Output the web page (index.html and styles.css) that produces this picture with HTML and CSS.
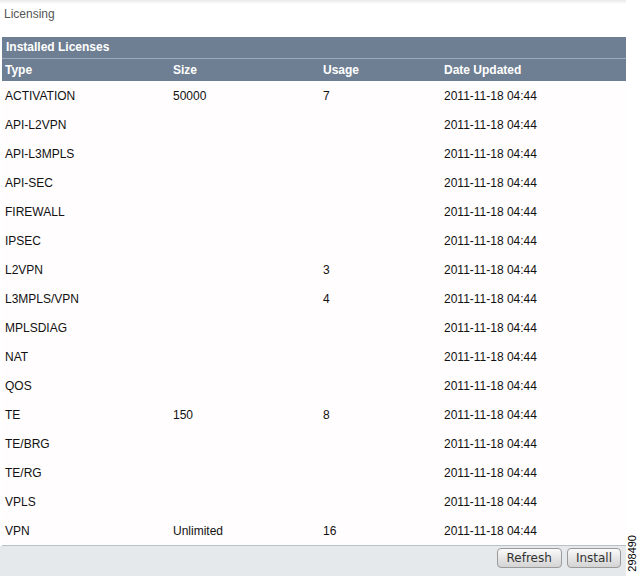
FILE: index.html
```html
<!DOCTYPE html>
<html lang="en">

<head>
    <meta charset="UTF-8">
    <title>Licensing</title>
    <link rel="stylesheet" href="styles.css">
</head>

<body>

    <div id="page">
        <div id="main">
            <div id="title">Licensing</div>
            <div id="panel">
                <div id="panel-head">Installed Licenses</div>
                <div class="row head">
                    <div>Type</div>
                    <div>Size</div>
                    <div>Usage</div>
                    <div>Date Updated</div>
                </div>
                <div id="rows"></div>
            </div>
            <div id="footer">
                <button class="btn">Refresh</button>
                <button class="btn">Install</button>
            </div>
        </div>
        <div id="side"><span id="fig-num">298490</span></div>
    </div>

    <script>
        let licenses = [
            ['ACTIVATION', '50000', '7'],
            ['API-L2VPN', '', ''],
            ['API-L3MPLS', '', ''],
            ['API-SEC', '', ''],
            ['FIREWALL', '', ''],
            ['IPSEC', '', ''],
            ['L2VPN', '', '3'],
            ['L3MPLS/VPN', '', '4'],
            ['MPLSDIAG', '', ''],
            ['NAT', '', ''],
            ['QOS', '', ''],
            ['TE', '150', '8'],
            ['TE/BRG', '', ''],
            ['TE/RG', '', ''],
            ['VPLS', '', ''],
            ['VPN', 'Unlimited', '16']
        ];
        let rows = document.getElementById('rows');
        licenses.forEach(item => {
            let row = document.createElement('div');
            row.classList.add('row');
            item.concat(['2011-11-18 04:44']).forEach(text => {
                let cell = document.createElement('div');
                cell.textContent = text;
                row.appendChild(cell);
            });
            rows.appendChild(row);
        });
    </script>

</body>

</html>
```

FILE: styles.css
```css
body {
    margin: 0;
    font-family: Arial, "Liberation Sans", sans-serif;
    font-size: 12px;
    color: #111;
    background-color: #fff;
}

#page {
    display: flex;
    width: 640px;
    height: 576px;
    overflow: hidden;
}

#main {
    width: 626px;
    display: flex;
    flex-direction: column;
    background: linear-gradient(#e9e9e9, #fff 4px);
}

#title {
    height: 37px;
    padding: 7px 0 0 4px;
    box-sizing: border-box;
    color: #555;
}

#panel {
    margin-left: 2px;
    background-color: #fffdfe;
    border-bottom: 1px solid #b8c0c8;
}

#panel-head {
    height: 21px;
    line-height: 21px;
    padding-left: 4px;
    background-color: #6f7f93;
    border-bottom: 1px solid #9ba8b7;
    color: #fff;
    font-weight: bold;
}

.row {
    display: grid;
    grid-template-columns: 168px 150px 121px 1fr;
    height: 29px;
    align-items: center;
    padding-left: 3px;
}

.row.head {
    height: 22px;
    background-color: #6f7f93;
    color: #fff;
    font-weight: bold;
}

#footer {
    flex: 1;
    display: flex;
    justify-content: flex-end;
    align-items: flex-start;
    gap: 5px;
    padding: 2px 5px 0 0;
    background-color: #e5e9ec;
}

.btn {
    height: 20px;
    padding: 0 9px;
    font-family: Tahoma, "DejaVu Sans", sans-serif;
    font-size: 12px;
    color: #333;
    border: 1px solid #9a9a9a;
    border-radius: 4px;
    background: linear-gradient(#fafafa, #e2e2e2 60%, #d4d4d4);
}

.btn + .btn {
    padding: 0 8px;
}

#side {
    flex: 1;
    position: relative;
}

#fig-num {
    position: absolute;
    right: 2px;
    bottom: 4px;
    writing-mode: vertical-rl;
    transform: rotate(180deg);
    font-family: Arial, "Liberation Sans", sans-serif;
    font-size: 11px;
    color: #000;
}
```
